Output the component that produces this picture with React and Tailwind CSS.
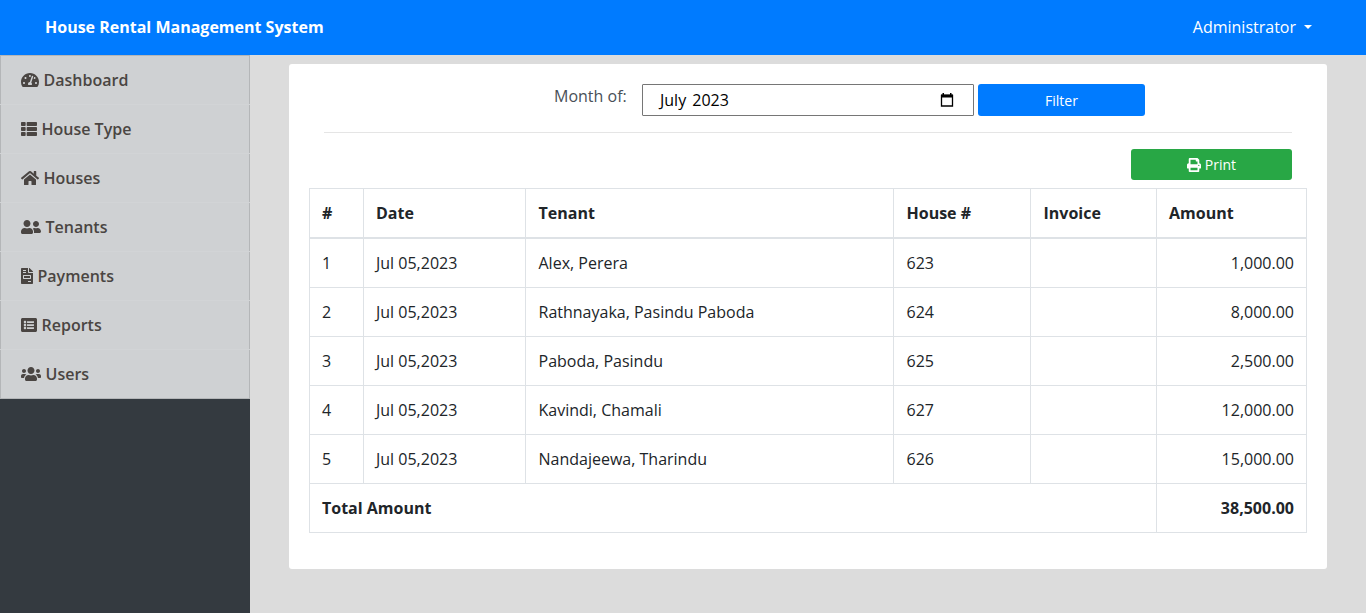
import {
  FaTachometerAlt, FaThList, FaHome, FaUserFriends, FaFileInvoice, FaListAlt, FaUsers, FaPrint,
} from "react-icons/fa";

const NAV = [
  { label: "Dashboard", Icon: FaTachometerAlt, width: "w-[18px]" },
  { label: "House Type", Icon: FaThList, width: "w-4" },
  { label: "Houses", Icon: FaHome, width: "w-[18px]" },
  { label: "Tenants", Icon: FaUserFriends, width: "w-5" },
  { label: "Payments", Icon: FaFileInvoice, width: "w-3" },
  { label: "Reports", Icon: FaListAlt, width: "w-4" },
  { label: "Users", Icon: FaUsers, width: "w-5" },
];

const ROWS = [
  ["1", "Jul 05,2023", "Alex, Perera", "623", "", "1,000.00"],
  ["2", "Jul 05,2023", "Rathnayaka, Pasindu Paboda", "624", "", "8,000.00"],
  ["3", "Jul 05,2023", "Paboda, Pasindu", "625", "", "2,500.00"],
  ["4", "Jul 05,2023", "Kavindi, Chamali", "627", "", "12,000.00"],
  ["5", "Jul 05,2023", "Nandajeewa, Tharindu", "626", "", "15,000.00"],
];

const HEADERS = ["#", "Date", "Tenant", "House #", "Invoice", "Amount"];

// Left padding of each column's cells
const PADS = ["pl-3", "pl-3", "pl-[12.5px]", "pl-[12.5px]", "pl-[12.5px]", "pl-3"];

function TopBar() {
  return (
    <header className="flex h-[55px] items-center justify-between bg-[#007bff] pb-0.5 pl-[45px] pr-[54px] text-white">
      <b className="font-bold">House Rental Management System</b>
      <button className="flex items-center gap-2">
        Administrator
        <span className="mt-px border-x-4 border-t-4 border-x-transparent border-t-white" />
      </button>
    </header>
  );
}

function Sidebar() {
  return (
    <nav className="w-[250px] shrink-0 bg-[#343a40]">
      <ul className="border-y border-y-[#b4b6b8] bg-[#cfd1d3]">
        {NAV.map(({ label, Icon, width }, i) => (
          <li key={label} className={i ? "border-t border-t-[#d2d4d6]" : ""}>
            <a
              href="#"
              className="flex h-12 items-center gap-[4.5px] border-x border-x-[#b4b6b8] pl-5 font-semibold text-[#4a4542]"
            >
              <Icon className={`h-4 shrink-0 ${width}`} />
              {label}
            </a>
          </li>
        ))}
      </ul>
    </nav>
  );
}

function Filter() {
  return (
    <form className="flex h-8 pl-[245px]">
      <label className="w-[88px] text-[#495057]">Month of:</label>
      <div className="flex h-8 w-[332px] items-center justify-between rounded-[1px] border border-[#767676] pl-[17px] pr-[19px] text-black">
        <span className="[word-spacing:2px]">July 2023</span>
        <svg className="h-[14px] w-[14px]" viewBox="0 0 14 14" fill="none">
          <path d="M1.5 2.5h11v10.5h-11z" stroke="#000" strokeWidth="1.3" />
          <path d="M1 1.5h12v3H1zM2.5 0H4v3H2.5zM10 0h1.5v3H10z" fill="#000" />
        </svg>
      </div>
      <button type="button" className="ml-1 h-8 w-[167px] rounded-[3px] bg-[#007bff] pt-px text-sm text-white">
        Filter
      </button>
    </form>
  );
}

function PaymentsTable() {
  return (
    <table className="w-[998px] table-fixed border-collapse text-[#212529]">
      <colgroup>
        <col className="w-[54px]" />
        <col className="w-[162px]" />
        <col className="w-[368px]" />
        <col className="w-[137px]" />
        <col className="w-[126px]" />
        <col className="w-[150px]" />
      </colgroup>
      <thead>
        <tr>
          {HEADERS.map((h, i) => (
            <th key={h} className={`h-[49px] border border-b-2 border-[#dee2e6] pr-3 pt-px text-left font-bold ${PADS[i]}`}>{h}</th>
          ))}
        </tr>
      </thead>
      <tbody>
        {ROWS.map((row, r) => (
          <tr key={row[0]}>
            {row.map((cell, i) => (
              <td
                key={i}
                className={`border border-[#dee2e6] pr-3 ${PADS[i]} ${r === 0 ? "h-[50px]" : "h-[49px]"} ${i === 5 ? "text-right" : ""}`}
              >
                {cell}
              </td>
            ))}
          </tr>
        ))}
      </tbody>
      <tfoot>
        <tr>
          <th colSpan={5} className="h-[49px] border border-[#dee2e6] px-3 text-left font-bold">Total Amount</th>
          <th className="border border-[#dee2e6] px-3 text-right font-bold">38,500.00</th>
        </tr>
      </tfoot>
    </table>
  );
}

export default function App() {
  return (
    <div className="flex h-[613px] flex-col overflow-hidden bg-[#dcdcdc] font-['Open_Sans',sans-serif] text-base">
      <TopBar />
      <div className="flex flex-1">
        <Sidebar />
        <main className="pl-[39px] pt-[9px]">
          <section className="h-[505px] w-[1038px] rounded-[3px] bg-white px-5 pt-5">
            <Filter />
            <hr className="ml-[15px] mr-[15px] mt-4 border-[#e5e5e5]" />
            <div className="flex justify-end pb-2 pr-[15px] pt-4">
              <button className="flex h-[31px] w-[161px] items-center justify-center gap-1 rounded-[3px] bg-[#28a745] text-sm text-white">
                <FaPrint className="h-[14px] w-[14px]" />
                Print
              </button>
            </div>
            <PaymentsTable />
          </section>
        </main>
      </div>
    </div>
  );
}
